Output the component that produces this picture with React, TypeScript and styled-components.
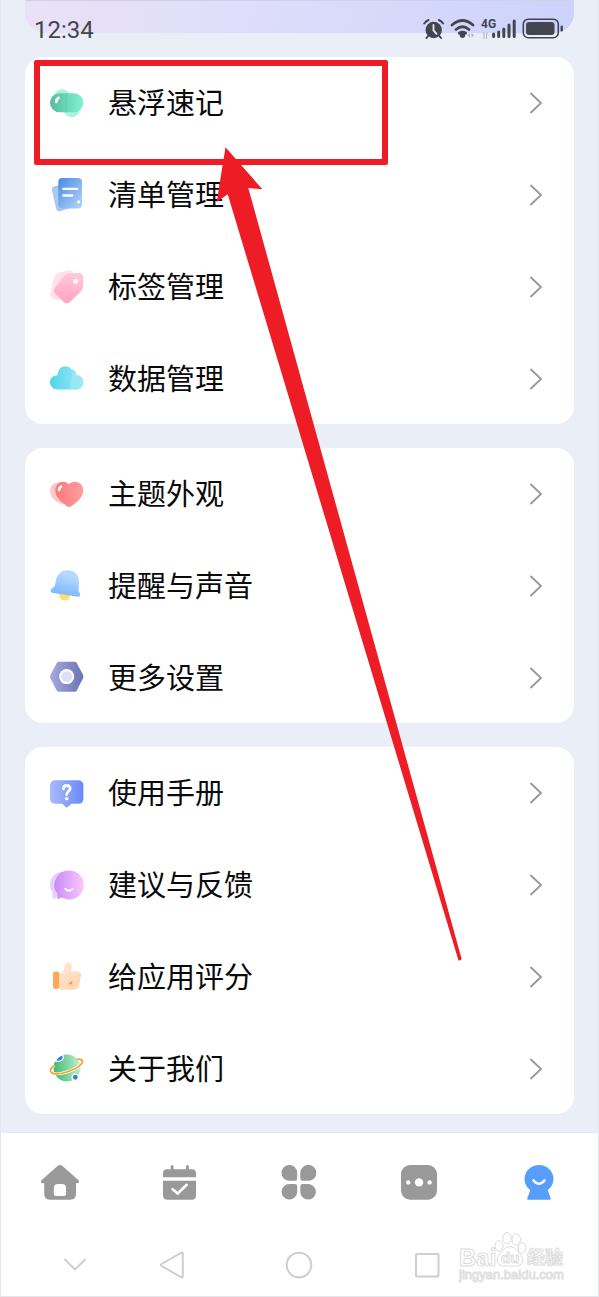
import React from "react";
import styled, { createGlobalStyle } from "styled-components";

const GlobalStyle = createGlobalStyle`
  *, *::before, *::after { box-sizing: border-box; }
  body {
    margin: 0;
    background: #ffffff;
    font-family: Roboto, "Noto Sans CJK SC", sans-serif;
    color: #0a0a0a;
  }
`;

const Page = styled.div`
  position: relative;
  display: flex;
  flex-direction: column;
  min-height: 100vh;
  background: #eaeff7;
`;

const Frame = styled.div`
  position: absolute;
  inset: 0;
  border: 1px solid #e2e6ee;
  border-top: 0;
  pointer-events: none;
`;

const Header = styled.header`
  position: relative;
  display: flex;
  align-items: center;
  justify-content: space-between;
  height: 57px;
  padding: 0 35px 0 34px;
`;

const Banner = styled.div`
  position: absolute;
  inset: 0 25px auto;
  height: 33px;
  border-top: 1px solid #d0d1e8;
  border-radius: 0 0 20px 20px;
  background: linear-gradient(100deg, #eae1f6 0%, #dedefa 40%, #ccd2fc 100%);
`;

const Clock = styled.time`
  position: relative;
  padding-top: 2px;
  font-size: 24px;
  line-height: 28px;
  color: #43454f;
`;

const StatusIcons = styled.svg`
  position: relative;
  display: block;
`;

const Content = styled.main`
  flex: 1;
  display: flex;
  flex-direction: column;
  gap: 24px;
  padding: 0 25px 18px;
`;

const Card = styled.section`
  display: flex;
  flex-direction: column;
  gap: 1px;
  border-radius: 18px;
  background: #ffffff;
`;

const Row = styled.button`
  display: flex;
  align-items: center;
  gap: 24px;
  width: 100%;
  height: 91px;
  padding: 0 32px 0 25px;
  border: 0;
  background: transparent;
  color: inherit;
  font: inherit;
  text-align: left;
`;

const Label = styled.span`
  flex: 1;
  padding-top: 3px;
  font-size: 29px;
  line-height: 40px;
`;

const RowIcon = styled.svg`
  flex: none;
  width: 34px;
  height: 34px;
  overflow: visible;
`;

const Chevron = styled.svg`
  flex: none;
  fill: none;
  stroke: #969696;
  stroke-width: 1.8;
  stroke-linecap: round;
`;

const TabBar = styled.nav`
  display: grid;
  grid-template-columns: repeat(5, 1fr);
  height: 100px;
  background: #ffffff;
  border-top: 1px solid #e4e9f2;
`;

const Tab = styled.button<{ $active?: boolean }>`
  display: grid;
  place-items: center;
  padding: 0;
  border: 0;
  background: transparent;
  color: ${(p) => (p.$active ? "#579dfb" : "#999999")};
`;

const SystemBar = styled.nav`
  position: relative;
  display: grid;
  grid-template-columns: 98fr 96fr 158fr 96fr 98fr;
  height: 65px;
  padding: 0 26px;
  background: #ffffff;
`;

const SystemButton = styled.button`
  display: grid;
  place-items: center;
  padding: 0;
  border: 0;
  background: transparent;

  svg {
    fill: none;
    stroke: #cfcfcf;
    stroke-width: 2;
    stroke-linecap: round;
    stroke-linejoin: round;
  }
`;

const Watermark = styled.svg`
  position: absolute;
  right: 31px;
  bottom: 11px;
`;

const Highlight = styled.div`
  position: absolute;
  top: 60px;
  left: 34px;
  width: 354px;
  height: 105px;
  border: 6px solid #ee1c25;
  border-radius: 2px;
  pointer-events: none;
`;

const Pointer = styled.svg`
  position: absolute;
  top: 147px;
  left: 216px;
  pointer-events: none;
`;

type GradientProps = { id: string; from: string; to: string; angle?: [number, number] };

const Gradient = ({ id, from, to, angle = [1, 0] }: GradientProps) => (
  <linearGradient id={id} x1="0" y1="0" x2={angle[0]} y2={angle[1]}>
    <stop offset="0" stopColor={from} />
    <stop offset="1" stopColor={to} />
  </linearGradient>
);

const icons = {
  pill: (
    <>
      <Gradient id="pill" from="#58bb9c" to="#80f2d5" />
      <path d="M12 11.500L21.700 23" stroke="#adf2df" strokeWidth="16.500" strokeLinecap="round" />
      <rect y="7.300" width="33.400" height="19" rx="9.500" fill="url(#pill)" />
      <path d="M16.300 7.300v19" stroke="#62c7a9" strokeWidth=".6" />
      <path d="M6.200 15.800q.2-2.600 2.300-3.900" fill="none" stroke="#fff" strokeWidth="2.800" strokeLinecap="round" />
    </>
  ),
  list: (
    <>
      <Gradient id="list" from="#478adf" to="#b5d6fb" angle={[1, 1]} />
      <path d="M5 8l9-2 6 24-10 3.200q-3 .6-3.800-2.200L1.900 12q-.6-3 3.100-4z" fill="#a9c9f2" />
      <rect x="8.300" width="23.700" height="30.400" rx="4" fill="url(#list)" />
      <path d="M13.200 10.800h14M13.200 17.500h9" stroke="#fff" strokeWidth="2.300" strokeLinecap="round" />
      <circle cx="28.700" cy="23.800" r="1.600" fill="#fff" />
    </>
  ),
  tag: (
    <>
      <Gradient id="tag" from="#ffc5d8" to="#ff9fbe" angle={[-0.2, 1]} />
      <path d="M8.500 2.800L18 .4q3-.8 5 1.600l5 8-14 20-8.500-.3q-5-1.300-5.300-5.700L3 11q1-6 5.500-8.200z" fill="#ffe1eb" />
      <path d="M18.300 3.500L28.600 3q4.600 0 4.700 4.700L33 17q-.2 2.400-1.700 4l-11 10.700q-3.200 3-6.500.3L5.200 23.500q-2.600-3.200.2-6.300l9.200-11.900q1.500-1.700 3.700-1.800z" fill="url(#tag)" />
      <circle cx="25.600" cy="11.500" r="2.400" fill="#fff" />
    </>
  ),
  cloud: (
    <>
      <Gradient id="cloud" from="#53d4e9" to="#9eeaf4" />
      <path d="M7.800 27.500C3 27.500 0 24.300 0 20.300c0-3.800 3-7 7.500-7C8 7.700 10.800 4.200 14.700 4.200c3.500 0 5.300 1.200 6.400 3.100 3.400.3 5.300 2.600 5.200 6 4.300-.3 7 3 7 7 0 4.200-3 7.200-7 7.200z" fill="url(#cloud)" />
      <path d="M22 12.500q-.2 9-2.300 15h6.600c4 0 7-3 7-7.200 0-4-2.700-7.300-7-7q.1-4-2.800-5.500-1.400 2-1.500 4.700z" fill="#9beaf5" opacity=".75" />
    </>
  ),
  heart: (
    <>
      <Gradient id="heart" from="#ff777b" to="#ff9e9e" />
      <path d="M15 8C10 3.500 0 5 0 14c0 7 7 12 13 13.500L20 20z" fill="#ffc9c9" />
      <path d="M18.800 7.300c5-4.800 14.500-2.800 14.500 6.500 0 7-7.800 12.500-12.500 15.700q-1.600 1-3.200-.1C12 25.700 5.300 20.500 5.300 13.800c0-9 8.500-11.300 13.500-6.500z" fill="url(#heart)" />
      <path d="M9 13q.3-2.200 2-3.400" fill="none" stroke="#fff" strokeWidth="2.600" strokeLinecap="round" />
    </>
  ),
  bell: (
    <>
      <Gradient id="bell" from="#b5d9ff" to="#66aefd" angle={[-0.3, 1]} />
      <circle cx="14.700" cy="26" r="5.600" fill="#ffdd76" />
      <path d="M17.500 1.300C24.500 1.300 29 6 28.900 12.300l-.2 8c0 1.700.3 2.600 1 3.400.9 1.200.6 4.300-1.400 4.100L2 23.800c-1.800-.4-1.700-2.700-.5-3.700l2.500-2.300c1-1 1.200-2 1.400-3.500C6.200 6 10.500 1.300 17.500 1.300z" fill="url(#bell)" />
    </>
  ),
  hex: (
    <>
      <Gradient id="hex" from="#a5abdd" to="#6a72b5" />
      <path d="M9 .8h15.500q1.500 0 2.300 1.400l6.200 11.600q.8 1.800 0 3.500l-6.200 12.200q-.8 1.300-2.300 1.300H9q-1.500 0-2.300-1.300L.4 17.500q-.8-1.800 0-3.500L6.700 2.200Q7.500.8 9 .8z" fill="url(#hex)" />
      <circle cx="16.700" cy="15.600" r="7.500" fill="#fff" />
      <circle cx="16.700" cy="15.600" r="5.400" fill="#dcdff6" />
    </>
  ),
  manual: (
    <>
      <Gradient id="manual" from="#a9bafd" to="#6b89fd" />
      <path d="M5.500 4.200h22.400q5.500 0 5.500 5.500v12.600q0 5.500-5.500 5.500h-6.500l-3.300 3q-1.300 1.200-2.600 0l-3.300-3H5.500Q0 27.800 0 22.300V9.700q0-5.500 5.500-5.500z" fill="url(#manual)" />
      <path d="M13.500 12.700c0-4.300 6.600-4.300 6.600-.2 0 2.800-3.400 2.700-3.400 6" fill="none" stroke="#fff" strokeWidth="2.900" strokeLinecap="round" />
      <circle cx="16.700" cy="22.800" r="1.800" fill="#fff" />
    </>
  ),
  feedback: (
    <>
      <Gradient id="feedback" from="#c98bf9" to="#f9c7fb" />
      <path d="M12 4C5 4 0 9.500 0 17q0 4 2.500 7.300v5.200q.3 2 2.500 1l3-2 7 .5z" fill="#e8cffc" />
      <path d="M19 2.500a14.500 14.500 0 1 1-7 27l-3 1.300q-2 .5-1.700-1.500l.2-3.300A14.500 14.500 0 0 1 19 2.500z" fill="url(#feedback)" />
      <path d="M15.300 20.800q3.600 3.800 7.200 0" fill="none" stroke="#fff" strokeWidth="1.900" strokeLinecap="round" />
    </>
  ),
  thumb: (
    <>
      <Gradient id="thumb" from="#ffe8d5" to="#ffd7b3" angle={[0.6, 1]} />
      <path d="M9 14l3.500-2q1.500-1 1.700-3l.5-3.500q.5-3 3.500-3c3 0 4 3 3.600 5.500l-.6 3.200h6.300q4 .3 3.600 4.300l-2 9.500q-1.100 4.300-5 4.800H12q-3 0-4-1.500z" fill="url(#thumb)" />
      <rect x="3" y="11.500" width="6.200" height="17.400" rx="2.300" fill="#ffa858" />
      <path d="M18.500 23q2.500-.2 3.700-2.500.9 3.600-1.500 4.300-1.600.2-2.200-1.800z" fill="#ff9945" />
    </>
  ),
  planet: (
    <>
      <Gradient id="planet" from="#45bd77" to="#c8f0d5" angle={[1, -0.1]} />
      <circle cx="17" cy="15.900" r="13.500" fill="url(#planet)" />
      <path d="M5.500 8.800Q7 4.700 12.300 3q2 1.800 0 4.700-2 2.500-6.800 1.100z" fill="#387fdc" stroke="#fff" strokeWidth="1.200" />
      <circle cx="25.300" cy="25.300" r="3.100" fill="#387fdc" stroke="#fff" strokeWidth="1.300" />
      <path d="M4.500 13.300C-4 19 1 24.500 16 20.300 31 16 38 7 27.500 7.100" fill="none" stroke="#fff" strokeWidth="3" />
      <path d="M4.500 13.300C-4 19 1 24.500 16 20.300 31 16 38 7 27.500 7.100" fill="none" stroke="#f5a11d" strokeWidth="1.600" strokeLinecap="round" />
    </>
  ),
};

type Item = { icon: keyof typeof icons; label: string };

const groups: Item[][] = [
  [
    { icon: "pill", label: "悬浮速记" },
    { icon: "list", label: "清单管理" },
    { icon: "tag", label: "标签管理" },
    { icon: "cloud", label: "数据管理" },
  ],
  [
    { icon: "heart", label: "主题外观" },
    { icon: "bell", label: "提醒与声音" },
    { icon: "hex", label: "更多设置" },
  ],
  [
    { icon: "manual", label: "使用手册" },
    { icon: "feedback", label: "建议与反馈" },
    { icon: "thumb", label: "给应用评分" },
    { icon: "planet", label: "关于我们" },
  ],
];

const tabs: { name: string; active?: boolean; art: React.ReactNode }[] = [
  {
    name: "首页",
    art: (
      <path
        fillRule="evenodd"
        d="M17.500 1q2.500-2 5 0l16 14.200q1.400 1.800-.5 3H36V29q0 5.700-5.700 5.700H10Q4.200 34.700 4.200 29V18.200H2q-2-1.200-.5-3zM18 19q-4.200 0-4.200 4.200v5.500q0 2.300 2.300 2.300h7.700q2.300 0 2.300-2.300v-5.500q0-4.200-4.200-4.200z"
      />
    ),
  },
  {
    name: "日程",
    art: (
      <>
        <path d="M3 12.300V8.300q0-4 4-4h3.700V1.600q0-1.600 1.400-1.600t1.400 1.600v2.700H26V1.600Q26 0 27.400 0t1.400 1.600v2.700H32q4 0 4 4v4z" />
        <path d="M3 15.700h33v14.500q0 4.500-4.500 4.500h-24Q3 34.700 3 30.200z" />
        <path d="M12.600 24.200l5.100 4.300 9-8.700" fill="none" stroke="#fff" strokeWidth="2.600" strokeLinecap="round" />
      </>
    ),
  },
  {
    name: "应用",
    art: (
      <path d="M10.300 0a7.800 7.800 0 0 1 7.900 7.800v5.600q0 2.300-2.300 2.300h-5.600a7.800 7.800 0 0 1 0-15.700zM29.500 0a7.800 7.800 0 0 1 0 15.700h-5.900q-2.300 0-2.300-2.300V7.800A7.800 7.800 0 0 1 29.500 0zM10.300 19h5.600q2.300 0 2.300 2.300v5.600a7.800 7.800 0 1 1-7.900-7.900zM23.600 19h5.900a7.800 7.800 0 1 1-8.200 7.900v-5.600q0-2.300 2.300-2.300z" />
    ),
  },
  {
    name: "更多",
    art: (
      <>
        <rect x="2" width="36" height="34.700" rx="9" />
        <g fill="#fff">
          <circle cx="20" cy="17.400" r="4.200" />
          <circle cx="9.300" cy="17.400" r="2.200" />
          <circle cx="30.600" cy="17.400" r="2.200" />
        </g>
      </>
    ),
  },
  {
    name: "我的",
    active: true,
    art: (
      <>
        <path d="M20 0a14 14 0 0 1 8.700 25.300l3 8q.4 1.400-1 1.400H9.300q-1.400 0-1-1.400l3-8A14 14 0 0 1 20 0z" />
        <path d="M14.600 15.500q5.400 6.500 10.800 0" fill="none" stroke="#fff" strokeWidth="2.600" strokeLinecap="round" />
      </>
    ),
  },
];

const systemButtons = [
  { name: "收起", art: <path d="M5 9.500l10 10L25 9.500" /> },
  { name: "返回", art: <path d="M24.500 2.700q1.300-.7 1.300.8v23q0 1.500-1.300.8L4.500 16q-1.300-1 0-2z" /> },
  { name: "主屏幕", art: <circle cx="15" cy="15" r="12.300" /> },
  { name: "最近任务", art: <rect x="4" y="4" width="22.500" height="22.500" rx="1" /> },
];

export default function App() {
  return (
    <Page>
      <GlobalStyle />
      <Header>
        <Banner />
        <Clock>12:34</Clock>
        <StatusIcons width="141" height="22" viewBox="0 0 141 22" fill="#43454f" aria-hidden="true">
          <circle cx="10.700" cy="12" r="8.200" />
          <path d="M1.300 5.500Q3 3 5.500 2M15.900 2q2.500 1 4.200 3.500M5.500 17.500l-2 2.500M16 17.500l2 2.500" fill="none" stroke="#43454f" strokeWidth="2" strokeLinecap="round" />
          <path d="M10.500 7v5.300l3 3.500" fill="none" stroke="#dfe1f8" strokeWidth="1.900" strokeLinecap="round" />
          <g fill="none" stroke="#43454f" strokeWidth="2.700" strokeLinecap="round">
            <path d="M29 7q10.500-9 21 0M33 11.500q6.500-5.500 13 0" />
            <path d="M36.300 15.200q3.200-2.300 6.400 0" />
          </g>
          <circle cx="39.500" cy="17.300" r="2.700" />
          <g fill="#b3b5c6">
            <path d="M44.500 17l2.500-2v5zM51 17l-2.500-2v5z" />
            <path d="M59 17l1.500-3v7h1v-7zM63 14v7h1v-7l2 4z" />
          </g>
          <text x="58" y="10" fontFamily="Roboto, sans-serif" fontSize="12" fontWeight="700">4G</text>
          <g stroke="#43454f" strokeWidth="3" strokeLinecap="round">
            <path d="M70.600 16v2.500M75.700 14v4.500M80.800 11v7.500M86 7v11.500M91.200 3v15.500" />
          </g>
          <rect x="100.300" y="1.200" width="35" height="18.500" rx="5" fill="none" stroke="#43454f" strokeWidth="1.600" />
          <rect x="103" y="4" width="28.500" height="13" rx="3" />
          <rect x="137.500" y="7.500" width="2.400" height="6" rx="1.200" />
        </StatusIcons>
      </Header>

      <Content>
        {groups.map((group, i) => (
          <Card key={i}>
            {group.map((item) => (
              <Row key={item.label} type="button">
                <RowIcon viewBox="0 0 34 34" fill="none" aria-hidden="true">
                  {icons[item.icon]}
                </RowIcon>
                <Label>{item.label}</Label>
                <Chevron width="12" height="22" viewBox="0 0 12 22" aria-hidden="true">
                  <path d="M1 1.500L11 11 1 20.500" />
                </Chevron>
              </Row>
            ))}
          </Card>
        ))}
      </Content>

      <TabBar>
        {tabs.map((tab) => (
          <Tab key={tab.name} type="button" aria-label={tab.name} $active={tab.active}>
            <svg width="40" height="35" viewBox="0 0 40 35" fill="currentColor">
              {tab.art}
            </svg>
          </Tab>
        ))}
      </TabBar>

      <SystemBar>
        {systemButtons.map((button) => (
          <SystemButton key={button.name} type="button" aria-label={button.name}>
            <svg width="30" height="30" viewBox="0 0 30 30">
              {button.art}
            </svg>
          </SystemButton>
        ))}
        <Watermark width="110" height="54" viewBox="0 0 110 54" fill="#fff" stroke="#dcdcdc" strokeWidth="1">
          <g fontFamily="Liberation Sans, Noto Sans CJK SC, sans-serif" fontWeight="700">
            <text x="1" y="34" fontSize="24">Bai</text>
            <text x="69" y="32" fontSize="18">经验</text>
          </g>
          <path d="M52 14.500q4.500 0 7.500 4.500l4 4.500q4 8-3.500 10.500H44q-7.500-2.500-3.500-10.500l4-4.500q3-4.500 7.500-4.500z" />
          <ellipse cx="41" cy="14" rx="4" ry="5.300" />
          <ellipse cx="49" cy="6.200" rx="4.200" ry="5.700" />
          <ellipse cx="58.300" cy="7.500" rx="4.200" ry="5.700" />
          <ellipse cx="64" cy="16" rx="4" ry="5.300" />
          <text x="43" y="31" fontFamily="Liberation Sans, sans-serif" fontSize="15" fontWeight="700">du</text>
          <text x="1" y="47" fontFamily="Liberation Sans, sans-serif" fontSize="13" stroke="#e0e0e0">jingyan.baidu.com</text>
        </Watermark>
      </SystemBar>

      <Frame />
      <Highlight />
      <Pointer width="250" height="816" viewBox="0 0 250 816" fill="#ee1c25" aria-hidden="true">
        <path d="M9.500.3L46.300 42.300 32.300 41 245.500 811.500Q245.500 814 242.500 813.500L11.700 47.300.7 55z" />
      </Pointer>
    </Page>
  );
}
